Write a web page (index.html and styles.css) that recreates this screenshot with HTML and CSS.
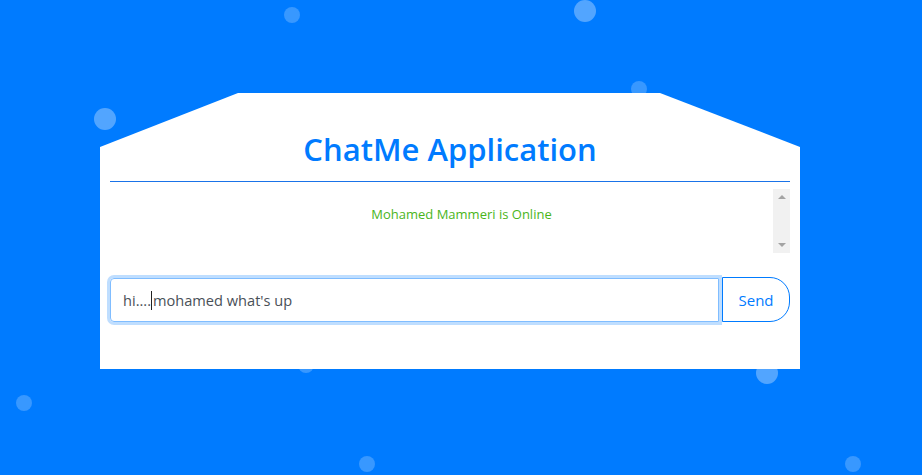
FILE: index.html
```html
<!DOCTYPE html>
<html>
<head>
<meta charset="utf-8">
<link rel="stylesheet" href="styles.css">
</head>
<body>
<div class="bubbles">
  <span class="bubble sm" style="left:284px;top:7px"></span>
  <span class="bubble lg" style="left:574px;top:0px"></span>
  <span class="bubble lg" style="left:94px;top:108px"></span>
  <span class="bubble sm" style="left:631px;top:81px"></span>
  <span class="bubble sm" style="left:298px;top:357px"></span>
  <span class="bubble lg" style="left:756px;top:362px"></span>
  <span class="bubble sm" style="left:16px;top:395px"></span>
  <span class="bubble sm" style="left:359px;top:456px"></span>
  <span class="bubble sm" style="left:845px;top:456px"></span>
</div>
<main class="card">
  <h1 class="title">ChatMe Application</h1>
  <div class="divider"></div>
  <div class="messages">
    <div class="messages-content">
      <p class="status">Mohamed Mammeri is Online</p>
    </div>
    <div class="scrollbar">
      <span class="arrow up"></span>
      <span class="arrow down"></span>
    </div>
  </div>
  <form class="composer">
    <div class="input"><span>hi....</span><span class="caret"></span><span>mohamed what's up</span></div>
    <button type="button" class="send">Send</button>
  </form>
</main>
</body>
</html>
```
FILE: styles.css
```css
html, body {
  margin: 0;
  padding: 0;
}
body {
  background: #007bff;
  width: 922px;
  height: 475px;
  overflow: hidden;
  position: relative;
  font-family: "Open Sans", "Noto Sans", sans-serif;
}
.bubbles {
  position: absolute;
  inset: 0;
  z-index: 0;
}
.bubble {
  position: absolute;
  border-radius: 50%;
  background: rgba(255, 255, 255, 0.22);
}
.bubble.sm {
  width: 16px;
  height: 16px;
}
.bubble.lg {
  width: 22px;
  height: 22px;
  background: rgba(255, 255, 255, 0.32);
}
.card {
  position: relative;
  z-index: 1;
  box-sizing: border-box;
  width: 700px;
  margin: 93px 0 0 100px;
  height: 276px;
  background: #fff;
  padding: 36px 10px 0;
  clip-path: polygon(138px 0, 560px 0, 700px 54px, 700px 100%, 0 100%, 0 54px);
  display: flex;
  flex-direction: column;
}
.title {
  margin: 0;
  height: 40px;
  line-height: 40px;
  text-align: center;
  color: #007bff;
  font-size: 31px;
  font-weight: 600;
  letter-spacing: 0;
}
.divider {
  margin: 12px 0 0;
  height: 1px;
  background: #1a73e8;
}
.messages {
  margin-top: 7px;
  height: 64px;
  display: flex;
}
.messages-content {
  flex: 1;
  padding-left: 40px;
}
.status {
  margin: 16px 0 0;
  text-align: center;
  color: #4ab51a;
  font-size: 13px;
  line-height: 18px;
}
.scrollbar {
  width: 17px;
  background: #f1f1f1;
  display: flex;
  flex-direction: column;
  justify-content: space-between;
  align-items: center;
  padding: 6px 0;
  box-sizing: border-box;
}
.arrow {
  width: 0;
  height: 0;
  border-left: 4px solid transparent;
  border-right: 4px solid transparent;
}
.arrow.up {
  border-bottom: 4px solid #a3a3a3;
}
.arrow.down {
  border-top: 4px solid #a3a3a3;
}
.composer {
  margin: 25px 0 0;
  display: flex;
  gap: 3px;
  height: 44px;
}
.input {
  flex: 1;
  box-sizing: border-box;
  border: 1px solid #80bdff;
  border-radius: 4px 0 0 4px;
  box-shadow: 0 0 0 3px rgba(0, 123, 255, 0.25);
  padding: 0 12px;
  display: flex;
  align-items: center;
  font-size: 14.6px;
  color: #495057;
  white-space: pre;
}
.caret {
  display: inline-block;
  width: 1px;
  height: 19px;
  background: #222;
  margin: 0 1px 0 0;
}
.send {
  width: 68px;
  box-sizing: border-box;
  background: #fff;
  border: 1px solid #007bff;
  border-radius: 0 20px 20px 0;
  color: #007bff;
  font-family: "Open Sans", "Noto Sans", sans-serif;
  font-size: 15px;
  padding: 0;
  margin-top: -1px;
  height: 45px;
}
```
